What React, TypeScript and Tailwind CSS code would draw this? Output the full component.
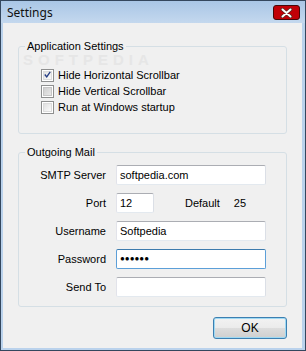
import React from 'react';

const font = "font-['Liberation_Sans',Arial,sans-serif]";

function CloseButton() {
  return (
    <div className="mt-[4px] flex h-[15px] w-[27px] items-center justify-center rounded-[3px] border border-red-950 bg-red-700">
      <svg width="13" height="10" viewBox="0 0 13 10">
        <path d="M2.5 1.5 L10.5 8.5 M10.5 1.5 L2.5 8.5" stroke="#5a2a24" strokeWidth="3.6" strokeLinecap="round" />
        <path d="M2.5 1.5 L10.5 8.5 M10.5 1.5 L2.5 8.5" stroke="#ffffff" strokeWidth="2" strokeLinecap="round" />
      </svg>
    </div>
  );
}

function CheckBox({ checked, muted }: { checked?: boolean; muted?: boolean }) {
  return (
    <span className="flex h-[13px] w-[13px] items-center justify-center border border-[#8e8f8f] bg-white">
      <span
        className={
          muted
            ? 'h-[9px] w-[9px] border border-[#c6c6c6] bg-[linear-gradient(135deg,#cfcfcf,#e8e8e8)]'
            : 'flex h-[9px] w-[9px] items-center justify-center border border-[#dcdcdc] bg-[linear-gradient(135deg,#e0e0e0,#fbfbfb)]'
        }
      >
        {checked && (
          <svg width="9" height="9" viewBox="0 0 9 9" className="-mt-px">
            <path d="M1 4.5 L3.5 7.5 L8 1" stroke="#243c84" strokeWidth="1.7" fill="none" />
          </svg>
        )}
      </span>
    </span>
  );
}

function CheckRow({ label, checked, muted }: { label: string; checked?: boolean; muted?: boolean }) {
  return (
    <div className="flex h-[16px] items-center gap-[4px]">
      <CheckBox checked={checked} muted={muted} />
      <span>{label}</span>
    </div>
  );
}

function TextBox({ value, width = 'w-[150px]', focused, dots }: { value?: string; width?: string; focused?: boolean; dots?: boolean }) {
  return (
    <div
      className={`flex h-[20px] items-center rounded-[2px] border bg-white pl-[3px] ${width} ${
        focused ? 'border-[#5c9fd8] border-t-[#3d7bad]' : 'border-[#e3e9ef] border-t-[#abadb3] border-l-[#e2e3ea] border-r-[#dbdfe6]'
      }`}
    >
      {dots ? <span className="text-[8px] text-black">●●●●●●</span> : <span>{value}</span>}
    </div>
  );
}

function Field({ label, children }: { label: string; children: React.ReactNode }) {
  return (
    <div className="flex h-[20px] items-center gap-[10px]">
      <span className="w-[87px] text-right">{label}</span>
      {children}
    </div>
  );
}

export default function App() {
  return (
    <div className={`${font} flex h-[351px] w-[306px] flex-col border border-[#34475e] bg-[#bad2ec] text-[11px] leading-[14px] text-black`}>
      <div className="flex h-[22px] shrink-0 items-start justify-between bg-linear-to-b from-[#a9c6e6] to-[#c4d8ee] pl-[6px] pr-[5px]">
        <span className="mt-[4px] font-['Noto_Sans',sans-serif] text-[12px] leading-[16px] text-[#101010]">Settings</span>
        <CloseButton />
      </div>

      <div className="relative mb-[2px] ml-[2px] mr-[3px] flex flex-1 flex-col bg-[#f0f0f0] px-[15px]">
        <span className="pointer-events-none absolute left-[20px] top-[32px] text-[15px] font-bold leading-[10px] tracking-[5px] text-[#e6e6e6]">SOFTPEDIA</span>

        <fieldset className="relative mt-[16px] rounded-[3px] border border-[#d5dfe5] pb-[18px] pt-[14px]">
          <legend className="ml-[6px] px-[2px]">Application Settings</legend>
          <div className="pl-[22px]">
            <CheckRow label="Hide Horizontal Scrollbar" checked />
            <CheckRow label="Hide Vertical Scrollbar" muted />
            <CheckRow label="Run at Windows startup" />
          </div>
        </fieldset>

        <fieldset className="mt-[11px] flex flex-col gap-[8px] rounded-[3px] border border-[#d5dfe5] pb-[9px] pt-[6px]">
          <legend className="ml-[6px] px-[2px]">Outgoing Mail</legend>
          <Field label="SMTP Server">
            <TextBox value="softpedia.com" />
          </Field>
          <Field label="Port">
            <TextBox value="12" width="w-[38px]" />
            <span className="ml-[21px]">Default</span>
            <span className="ml-[4px]">25</span>
          </Field>
          <Field label="Username">
            <TextBox value="Softpedia" />
          </Field>
          <Field label="Password">
            <TextBox focused dots />
          </Field>
          <Field label="Send To">
            <TextBox />
          </Field>
        </fieldset>

        <div className="mt-[10px] flex justify-end">
          <button className="h-[22px] w-[74px] rounded-[3px] border border-[#3c7fb1] bg-[linear-gradient(180deg,#f2f2f2_0%,#ebebeb_50%,#dddddd_51%,#cfcfcf_100%)] text-[12px] shadow-[inset_0_0_0_1px_#9fd9f3]">
            OK
          </button>
        </div>
      </div>
    </div>
  );
}
